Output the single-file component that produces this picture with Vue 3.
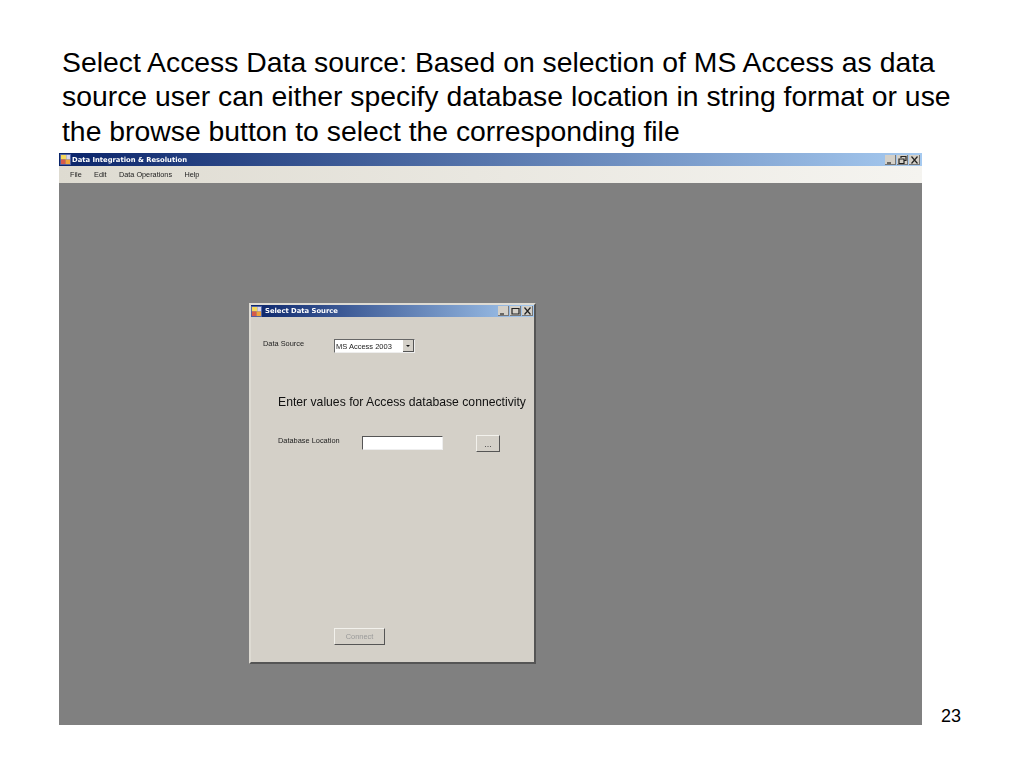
<template>
  <div class="slide">
    <p class="heading">
      Select Access Data source: Based on selection of MS Access as data<br />
      source user can either specify database location in string format or use<br />
      the browse button to select the corresponding file
    </p>

    <div class="bottom">
      <div class="app-window">
        <div class="titlebar main-bar">
          <svg class="app-icon" viewBox="0 0 12 12">
            <rect x="0" y="0" width="12" height="12" fill="#4a5fa8" />
            <rect x="1" y="1" width="6" height="5" fill="#f6d85a" />
            <rect x="7" y="1" width="4" height="5" fill="#d9d6e8" />
            <rect x="1" y="6" width="5" height="5" fill="#d65a4a" />
            <rect x="6" y="6" width="5" height="5" fill="#f0a53a" />
          </svg>
          <span class="title-text main-title">Data Integration &amp; Resolution</span>
          <div class="win-buttons">
            <span v-for="b in mainButtons" :key="b" class="win-btn">
              <svg viewBox="0 0 11 10"><path :d="b" fill="none" stroke="#222" stroke-width="1.2" /></svg>
            </span>
          </div>
        </div>

        <div class="menubar">
          <span v-for="m in menus" :key="m" class="menu-item">{{ m }}</span>
        </div>

        <div class="workspace">
          <div class="dialog">
            <div class="titlebar dialog-bar">
              <svg class="app-icon" viewBox="0 0 12 12">
                <rect x="0" y="0" width="12" height="12" fill="#4a5fa8" />
                <rect x="1" y="1" width="6" height="5" fill="#f6d85a" />
                <rect x="7" y="1" width="4" height="5" fill="#d9d6e8" />
                <rect x="1" y="6" width="5" height="5" fill="#d65a4a" />
                <rect x="6" y="6" width="5" height="5" fill="#f0a53a" />
              </svg>
              <span class="title-text dialog-title">Select Data Source</span>
              <div class="win-buttons">
                <span v-for="b in dialogButtons" :key="b" class="win-btn">
                  <svg viewBox="0 0 11 10"><path :d="b" fill="none" stroke="#222" stroke-width="1.2" /></svg>
                </span>
              </div>
            </div>

            <div class="source-row">
              <span class="label source-label">Data Source</span>
              <div class="combo">
                <span class="combo-text">MS Access 2003</span>
                <span class="combo-arrow"></span>
              </div>
            </div>

            <h4 class="section-title">Enter values for Access database connectivity</h4>

            <div class="location-row">
              <span class="label location-label">Database Location</span>
              <div class="text-input"></div>
              <button class="browse-btn">...</button>
            </div>

            <button class="connect-btn" disabled>Connect</button>
          </div>
        </div>
      </div>

      <span class="page-number">23</span>
    </div>
  </div>
</template>

<script setup>
const menus = ['File', 'Edit', 'Data Operations', 'Help']

const minimize = 'M2 8H6'
const maximize = 'M2 2.5H9V8H2Z'
const restore = 'M4 3V1.5H9V5.5H7.5M2 4H7V8.5H2Z'
const close = 'M2.5 1.5L8.5 8.5M8.5 1.5L2.5 8.5'

const mainButtons = [minimize, restore, close]
const dialogButtons = [minimize, maximize, close]
</script>

<style>
body {
  background: #fff;
}
</style>

<style scoped>
.slide {
  width: 1024px;
  height: 768px;
  overflow: hidden;
  background: #fff;
  font-family: "Liberation Sans", Arial, sans-serif;
}

.heading {
  margin: 0;
  padding: 45px 0 0 62px;
  height: 153px;
  box-sizing: border-box;
  font-size: 28.35px;
  line-height: 34.3px;
  color: #000;
  white-space: nowrap;
}

.bottom {
  display: flex;
  padding-left: 59px;
}

.app-window {
  width: 863px;
  height: 572px;
  display: flex;
  flex-direction: column;
  filter: blur(0.3px);
}

.titlebar {
  display: flex;
  align-items: center;
  color: #fff;
}

.main-bar {
  height: 13px;
  padding: 0 1px;
  background: linear-gradient(90deg, #0a246a, #a6caf0);
}

.dialog-bar {
  height: 12px;
  background: linear-gradient(90deg, #0a246a, #a6caf0);
}

.app-icon {
  width: 11px;
  height: 11px;
  flex: none;
}

.title-text {
  font-family: "DejaVu Sans", sans-serif;
  font-weight: 700;
  font-size: 6.8px;
  white-space: nowrap;
}

.main-title {
  margin-left: 1px;
}

.dialog-title {
  margin-left: 3px;
}

.win-buttons {
  display: flex;
  gap: 1px;
  margin-left: auto;
  padding-right: 1px;
}

.win-btn {
  width: 11px;
  height: 10px;
  background: #d4d0c8;
  box-shadow: inset -1px -1px 0 #777;
  display: block;
}

.win-btn svg {
  display: block;
  width: 11px;
  height: 10px;
}

.menubar {
  height: 17px;
  display: flex;
  align-items: center;
  background: linear-gradient(90deg, #dedbd1, #f5f4f0);
  font-size: 7.3px;
  color: #222;
  padding-left: 11px;
  gap: 12.3px;
}

.workspace {
  flex: 1;
  background: #808080;
  padding: 120px 0 0 190px;
}

.dialog {
  width: 287px;
  height: 361px;
  box-sizing: border-box;
  background: #d4d0c8;
  border: 2px solid;
  border-color: #dedbd3 #555 #555 #dedbd3;
  display: flex;
  flex-direction: column;
}

.label {
  font-size: 7.4px;
  color: #222;
  white-space: nowrap;
}

.source-row {
  display: flex;
  align-items: flex-start;
  margin-top: 22px;
  padding-left: 12px;
  height: 14px;
}

.source-label {
  width: 71px;
}

.combo {
  width: 81px;
  height: 14px;
  box-sizing: border-box;
  background: #fff;
  border: 1px solid;
  border-color: #666 #eee #eee #666;
  display: flex;
  align-items: center;
  justify-content: space-between;
}

.combo-text {
  font-size: 7.5px;
  color: #222;
  padding-left: 1px;
  white-space: nowrap;
}

.combo-arrow {
  width: 11px;
  height: 12px;
  background: #d4d0c8;
  box-shadow: inset -1px -1px 0 #555;
  position: relative;
}

.combo-arrow::after {
  content: "";
  position: absolute;
  left: 3px;
  top: 5px;
  border: 2.5px solid transparent;
  border-top-color: #111;
  border-bottom: 0;
}

.section-title {
  margin: 42px 0 0 27px;
  font-size: 12.2px;
  line-height: 14px;
  font-weight: 400;
  color: #111;
  white-space: nowrap;
}

.location-row {
  display: flex;
  align-items: center;
  margin-top: 26px;
  padding-left: 27px;
  height: 17px;
}

.location-label {
  width: 84px;
  margin-top: -6px;
}

.text-input {
  width: 81px;
  height: 14px;
  margin-top: -2px;
  box-sizing: border-box;
  background: #fff;
  border: 1px solid;
  border-color: #555 #eee #eee #555;
}

.browse-btn,
.connect-btn {
  padding: 0;
  box-sizing: border-box;
  background: #d4d0c8;
  border: 1px solid;
  border-color: #f2f1ec #555 #555 #f2f1ec;
  font-family: inherit;
  font-size: 7.4px;
}

.browse-btn {
  width: 24px;
  height: 17px;
  margin-left: 33px;
  font-size: 9px;
  color: #444;
}

.connect-btn {
  width: 51px;
  height: 17px;
  margin: 176px 0 0 83px;
  color: #999;
}

.page-number {
  align-self: flex-end;
  margin-left: 19px;
  margin-bottom: -1px;
  font-size: 18px;
  line-height: 20px;
  color: #000;
}
</style>
